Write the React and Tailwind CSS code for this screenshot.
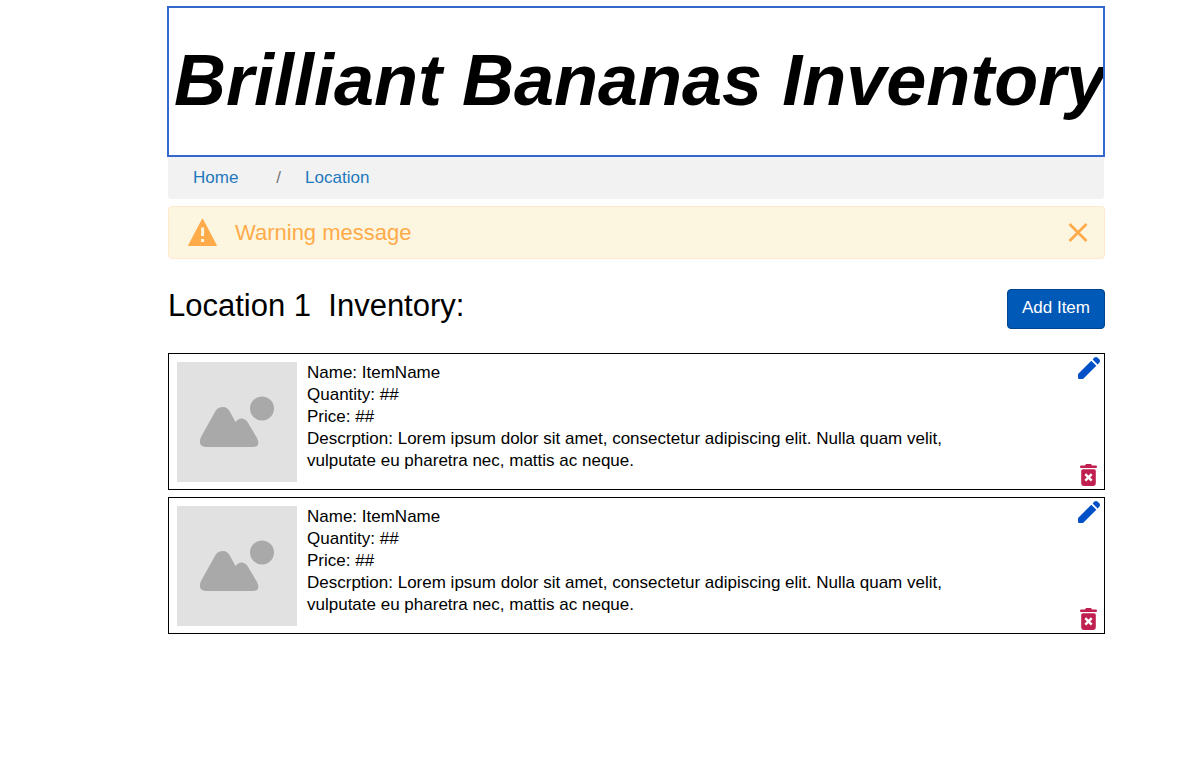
import React from "react";

function WarningIcon() {
  return (
    <svg viewBox="0 0 30 28" className="h-7 w-[30px] shrink-0" aria-hidden="true">
      <path d="M14.500 0 L28.500 26.500 H0.500 Z" fill="#ffab4a" stroke="#ffab4a" strokeWidth="1" strokeLinejoin="round" />
      <path d="M13.100 8.500h3v8.500h-3zM13.100 20h3v3h-3z" fill="#fcf6e0" />
    </svg>
  );
}

function CloseIcon() {
  return (
    <svg viewBox="0 0 20 20" className="h-5 w-5" aria-hidden="true">
      <path d="M1.500 1 L18.500 18 M18.500 1 L1.500 18" stroke="#ffab4a" strokeWidth="2.700" />
    </svg>
  );
}

function PencilIcon() {
  return (
    <svg viewBox="0 0 22 22" className="h-[22px] w-[22px]" fill="#0050c8" aria-hidden="true">
      <path d="M.5 16.500L13.300 3.700l5 5L5.500 21.500q-.5.500-1.200.5H1.200Q0 22 0 20.800v-3.100q0-.7.5-1.200z" />
      <path d="M14.600 2.400l1.600-1.600q.8-.8 1.800-.8t1.700.7l1.600 1.600q.7.700.7 1.700t-.8 1.800l-1.600 1.600z" />
    </svg>
  );
}

function TrashIcon() {
  return (
    <svg viewBox="0 0 18 22" className="h-[22px] w-[18px]" aria-hidden="true">
      <path d="M1.200 1.500H5L6 0h5l1 1.500h3.800a1.200 1.200 0 0 1 0 2.500H1.200a1.200 1.200 0 0 1 0-2.500Z" fill="#c0204f" />
      <path d="M3 5.200h11q1.800 0 1.800 1.800v12q0 3-3 3H4.200q-3 0-3-3V7q0-1.800 1.800-1.800Z" fill="#c0204f" />
      <path d="M5.300 10.200l6.400 6.400M11.700 10.200l-6.400 6.400" stroke="#fff" strokeWidth="2.500" />
    </svg>
  );
}

function Placeholder() {
  return (
    <svg viewBox="0 0 120 120" className="h-[120px] w-[120px] shrink-0" role="img" aria-label="Item">
      <rect width="120" height="120" fill="#e1e1e1" />
      <circle cx="85" cy="46.500" r="12" fill="#a9a9a9" />
      <path d="M24 75 L38.500 49 Q41 45 46 45 Q50 45 52.500 49 L58.500 60 Q61 56.500 64.500 56.500 Q68 56.500 70.500 60 L80 76 Q84 85 76 85 H30 Q20 85 24 75Z" fill="#a9a9a9" />
    </svg>
  );
}

function Item() {
  return (
    <li className="flex h-[137px] justify-between border border-black pt-2 pl-2">
      <div className="flex gap-[10px]">
        <Placeholder />
        <div className="max-w-[660px] text-[17px] leading-[22px]">
          <p>Name: ItemName</p>
          <p>Quantity: ##</p>
          <p>Price: ##</p>
          <p>Descrption: Lorem ipsum dolor sit amet, consectetur adipiscing elit. Nulla quam velit, vulputate eu pharetra nec, mattis ac neque.</p>
        </div>
      </div>
      <div className="-mt-2 flex flex-col items-center justify-between py-[3px] pr-1">
        <button type="button" aria-label="Edit item"><PencilIcon /></button>
        <button type="button" aria-label="Delete item"><TrashIcon /></button>
      </div>
    </li>
  );
}

export default function App() {
  return (
    <main className="mr-20 ml-[168px] bg-white pt-[6px] font-['Liberation_Sans',Arial,sans-serif] text-black">
      <header className="-ml-px flex h-[151px] items-center overflow-hidden border-2 border-[#3467ce] pb-1 pl-[5px]">
        <h1 className="text-[72px] leading-none font-bold whitespace-nowrap italic">Brilliant Bananas Inventory</h1>
      </header>
      <nav aria-label="Breadcrumb" className="mr-px flex h-[42px] items-center rounded-b bg-[#f2f2f2] pl-[25px] text-[17px] text-[#1f78bd]">
        <a href="#home">Home</a>
        <span className="mr-6 ml-[38px] text-[#777777]">/</span>
        <a href="#location">Location</a>
      </nav>
      <div role="alert" className="mt-[7px] flex h-[53px] items-center rounded border border-[#ffe8cd] bg-[#fcf6e0] pr-4 pl-[19px] text-[#ffab4a]">
        <WarningIcon />
        <span className="ml-[17px] text-[22px]">Warning message</span>
        <button type="button" aria-label="Dismiss" className="ml-auto"><CloseIcon /></button>
      </div>
      <div className="mt-[30px] flex items-start justify-between">
        <h2 className="text-[31px] leading-[34px] whitespace-pre">Location 1  Inventory:</h2>
        <button type="button" className="h-10 rounded border border-[#00438f] bg-[#0058b7] px-[14px] pb-[2px] text-[17px] text-white">Add Item</button>
      </div>
      <ul className="mt-6 flex flex-col gap-[7px]">
        <Item />
        <Item />
      </ul>
    </main>
  );
}
